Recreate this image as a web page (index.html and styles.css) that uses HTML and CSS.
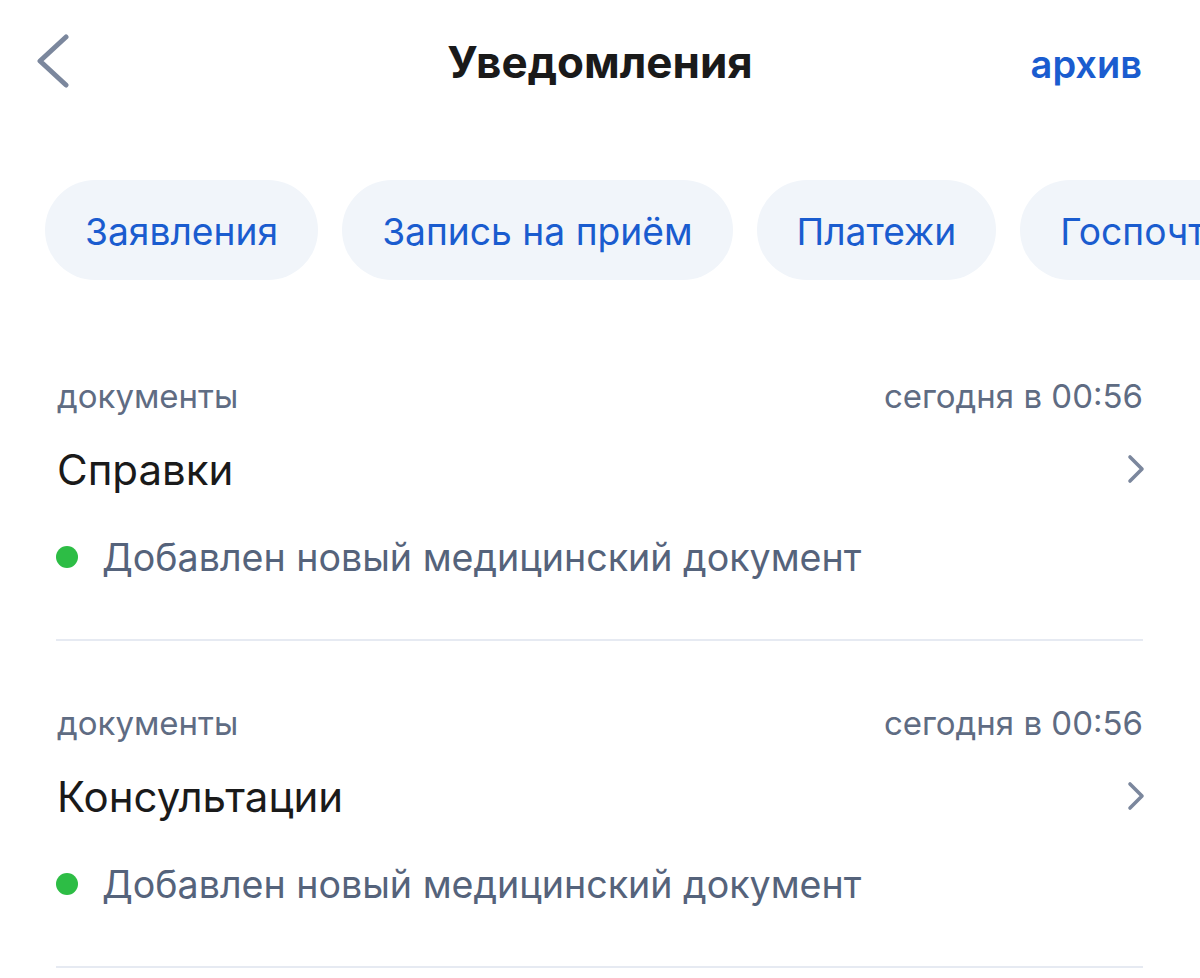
FILE: index.html
```html
<!DOCTYPE html>
<html lang="ru">
<head>
<meta charset="utf-8">
<title>Уведомления</title>
<link rel="stylesheet" href="styles.css">
</head>
<body>
<div class="screen">
  <header class="topbar">
    <div class="topbar-left">
      <svg class="back" width="34" height="56" viewBox="0 0 34 56" aria-hidden="true">
        <polyline points="29,3 3,27 29,51" fill="none" stroke="#7b879d" stroke-width="5" stroke-linecap="round" stroke-linejoin="round"/>
      </svg>
    </div>
    <h1 class="title">Уведомления</h1>
    <div class="topbar-right"><a class="archive">архив</a></div>
  </header>

  <nav class="chips">
    <span class="chip">Заявления</span>
    <span class="chip">Запись на приём</span>
    <span class="chip">Платежи</span>
    <span class="chip">Госпочта</span>
  </nav>

  <ul class="list">
    <li class="item">
      <div class="meta"><span>документы</span><span>сегодня в 00:56</span></div>
      <div class="item-title"><span>Справки</span>
        <svg class="chev" width="20" height="30" viewBox="0 0 20 30" aria-hidden="true"><polyline points="4,3 16,15 4,27" fill="none" stroke="#7b879d" stroke-width="3.6" stroke-linecap="round" stroke-linejoin="round"/></svg>
      </div>
      <div class="status"><span class="dot"></span><span>Добавлен новый медицинский документ</span></div>
    </li>
    <li class="item">
      <div class="meta"><span>документы</span><span>сегодня в 00:56</span></div>
      <div class="item-title"><span>Консультации</span>
        <svg class="chev" width="20" height="30" viewBox="0 0 20 30" aria-hidden="true"><polyline points="4,3 16,15 4,27" fill="none" stroke="#7b879d" stroke-width="3.6" stroke-linecap="round" stroke-linejoin="round"/></svg>
      </div>
      <div class="status"><span class="dot"></span><span>Добавлен новый медицинский документ</span></div>
    </li>
  </ul>
</div>
</body>
</html>
```
FILE: styles.css
```css
* { box-sizing: border-box; }
html, body { margin: 0; padding: 0; background: #fff; }
body {
  font-family: Inter, "Noto Sans", "Liberation Sans", sans-serif;
  color: #1a1a1a;
  width: 1200px;
  height: 978px;
  overflow: hidden;
}
.screen { width: 1200px; }

.topbar {
  display: grid;
  grid-template-columns: 1fr auto 1fr;
  align-items: center;
  height: 124px;
  padding: 0 58px;
}
.topbar-left { display: flex; align-items: center; }
.back { display: block; margin-left: -21px; }
.title {
  margin: 0;
  font-size: 44px;
  font-weight: 700;
  line-height: 48px;
  color: #1a1a1a;
}
.topbar-right { display: flex; justify-content: flex-end; }
.archive {
  font-size: 38px;
  font-weight: 600;
  color: #1a5ccf;
  line-height: 48px;
  margin-top: 4px;
}

.chips {
  display: flex;
  gap: 24px;
  padding-left: 45px;
  margin-top: 56px;
  white-space: nowrap;
  overflow: hidden;
}
.chip {
  flex: none;
  height: 100px;
  display: flex;
  align-items: center;
  padding: 3px 40px 0;
  border-radius: 50px;
  background: #f1f5fa;
  color: #1a5ccf;
  font-size: 37.2px;
  line-height: 1;
}

.list {
  list-style: none;
  margin: 34px 0 0;
  padding: 0 57px 0 56px;
}
.item {
  padding-top: 62px;
  padding-bottom: 58px;
  border-bottom: 2px solid #e6eaf2;
}
.meta {
  display: flex;
  justify-content: space-between;
  height: 40px;
  align-items: center;
  font-size: 33px;
  color: #5f6c83;
  padding-left: 1px;
}
.item-title {
  display: flex;
  justify-content: space-between;
  align-items: center;
  height: 48px;
  margin-top: 29px;
  font-size: 42px;
  color: #1a1a1a;
  padding-left: 1px;
}
.chev { display: block; margin-right: -3px; }
.status {
  display: flex;
  align-items: center;
  gap: 24px;
  height: 48px;
  margin-top: 40px;
  font-size: 37.6px;
  color: #55637b;
}
.dot {
  flex: none;
  width: 22px;
  height: 22px;
  border-radius: 50%;
  background: #2dbd45;
}
```
